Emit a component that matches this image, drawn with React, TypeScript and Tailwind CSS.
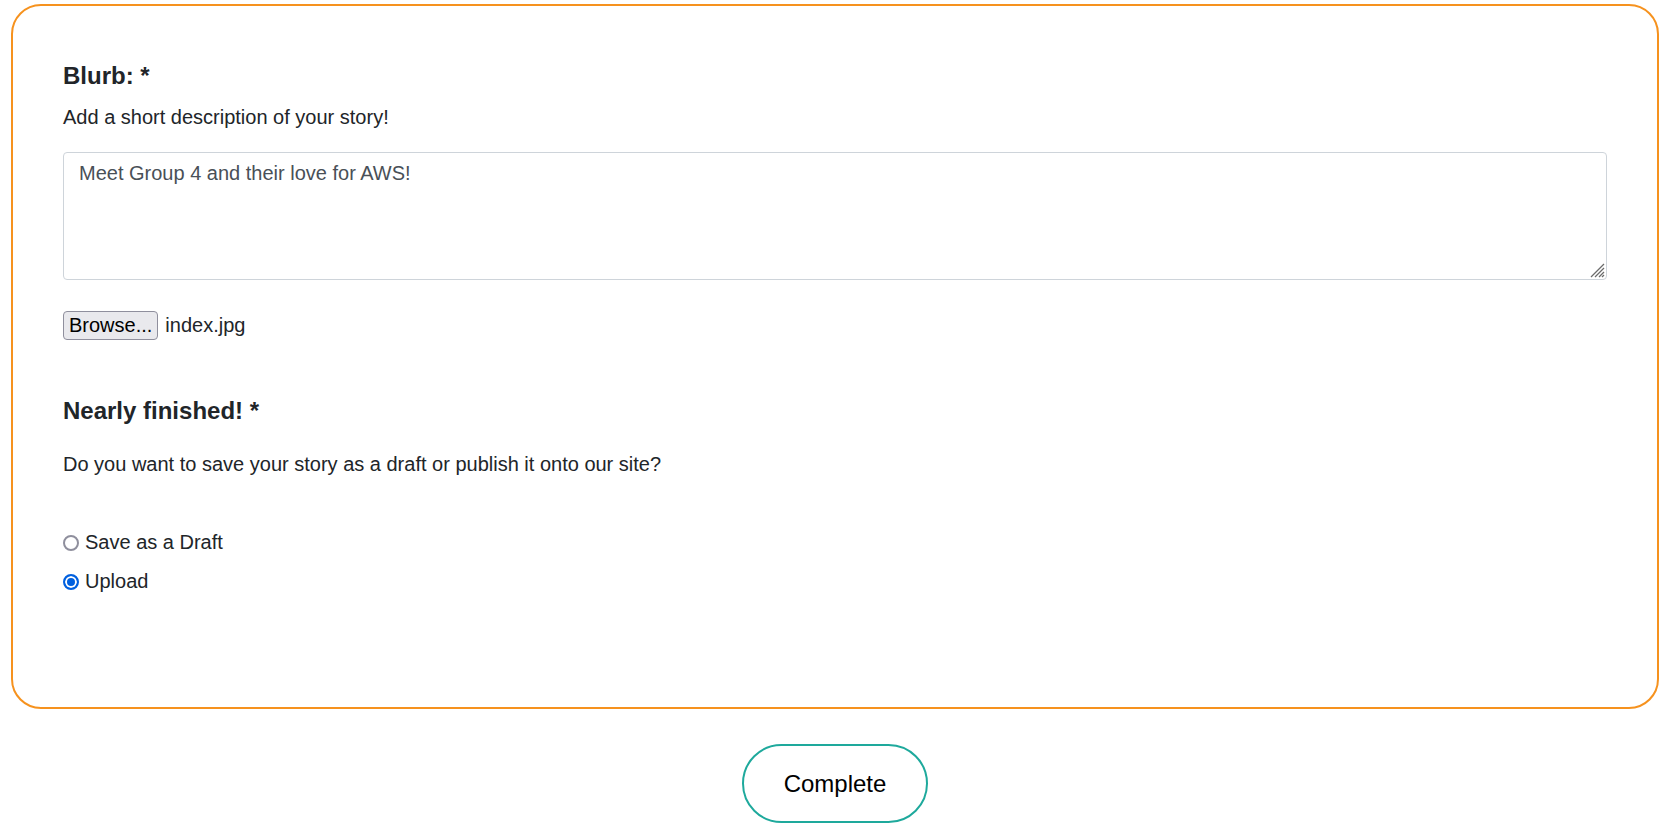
import { useState } from "react";

const font = "font-['Liberation_Sans',Arial,sans-serif]";

export default function App() {
  const [choice, setChoice] = useState("upload");
  const [blurb, setBlurb] = useState("Meet Group 4 and their love for AWS!");

  return (
    <div className={`${font} min-h-screen bg-white pb-[7px] text-[20px] text-[#212529]`}>
      <div className="mx-[11px] mt-[4px] rounded-[30px] border-[2.5px] border-[#f6921e] px-[50px] pb-[114px] pt-[56px]">
        <h3 className="text-[24px] font-bold leading-[27px]">Blurb: *</h3>
        <p className="mt-[17px] leading-[23px]">Add a short description of your story!</p>
        <div className="relative mt-[23px]">
          <textarea
            value={blurb}
            onChange={(e) => setBlurb(e.target.value)}
            className="block h-[128px] w-full resize-none rounded-[4px] border border-[#ced4da] px-[15px] pt-[9px] text-[20px] leading-[23px] text-[#495057] outline-none"
          />
          {/* resize grip */}
          <svg
            className="pointer-events-none absolute bottom-[2px] right-[2px]"
            width="16"
            height="16"
            viewBox="0 0 16 16"
          >
            <g stroke="#6b6b6b" strokeWidth="1.3">
              <line x1="2" y1="15" x2="15" y2="2" />
              <line x1="6" y1="15" x2="15" y2="6" />
              <line x1="10" y1="15" x2="15" y2="10" />
              <line x1="13" y1="15" x2="15" y2="13" />
            </g>
          </svg>
        </div>
        <div className="mt-[31px] flex items-center gap-[7px]">
          <button className="h-[29px] rounded-[4px] border border-[#8f8f9d] bg-[#e9e9ed] px-[5px] text-[20px] leading-[23px] text-black">
            Browse...
          </button>
          <span className="leading-[23px]">index.jpg</span>
        </div>

        <h3 className="mt-[57px] text-[24px] font-bold leading-[27px]">Nearly finished! *</h3>
        <p className="mt-[29px] leading-[23px]">
          Do you want to save your story as a draft or publish it onto our site?
        </p>

        <div className="mt-[55px] flex flex-col gap-[16px]">
          {[
            { id: "draft", label: "Save as a Draft" },
            { id: "upload", label: "Upload" },
          ].map((opt) => (
            <label key={opt.id} className="flex items-center leading-[23px]">
              <input
                type="radio"
                name="status"
                checked={choice === opt.id}
                onChange={() => setChoice(opt.id)}
                className="m-0 mr-[6px] h-4 w-4 appearance-none rounded-full border-2 border-[#8f8f9d] bg-white checked:border-[#0060df] checked:bg-[#0060df] checked:shadow-[inset_0_0_0_2px_white]"
              />
              {opt.label}
            </label>
          ))}
        </div>
      </div>

      <div className="mt-[35px] flex justify-center">
        <button className="h-[79px] w-[186px] rounded-full border-2 border-[#1ea99c] bg-white text-[24px] text-black">
          Complete
        </button>
      </div>
    </div>
  );
}
